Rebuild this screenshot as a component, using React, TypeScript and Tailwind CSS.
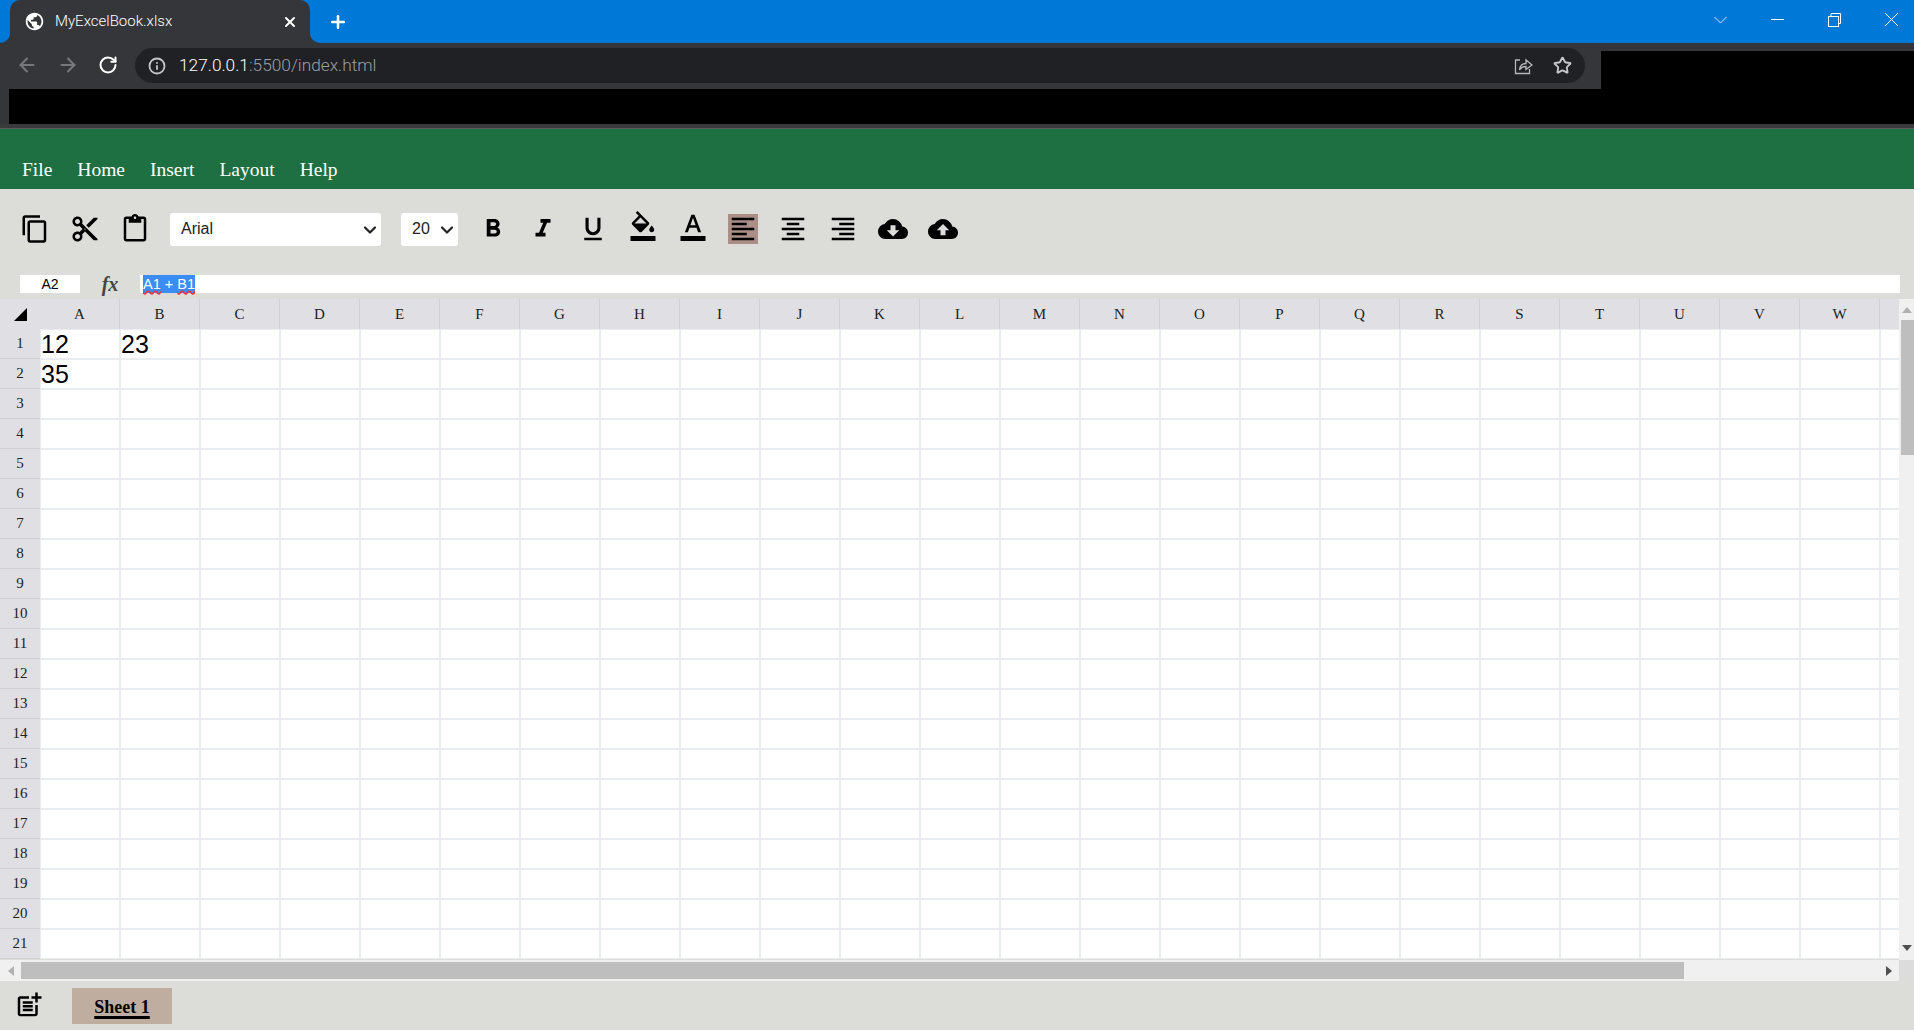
import { ArrowLeft, ArrowRight, ChevronDown, Info, Plus, RotateCw, Star, X } from 'lucide-react'
import {
  MdCloudDownload,
  MdCloudUpload,
  MdContentCopy,
  MdContentCut,
  MdContentPaste,
  MdFormatAlignCenter,
  MdFormatAlignLeft,
  MdFormatAlignRight,
  MdFormatBold,
  MdFormatColorFill,
  MdFormatColorText,
  MdFormatItalic,
  MdFormatUnderlined,
  MdPostAdd,
  MdPublic,
} from 'react-icons/md'

// last entry is the column that is cut off by the scrollbar, so it has no label
const columns = [...'ABCDEFGHIJKLMNOPQRSTUVW'.split(''), '']
const rows = Array.from({ length: 21 }, (_, i) => i + 1)
const menu = ['File', 'Home', 'Insert', 'Layout', 'Help']
const cells: Record<string, string> = { A1: '12', B1: '23', A2: '35' }

function BrowserChrome() {
  return (
    <div className="font-['Roboto',sans-serif]">
      {/* tab strip */}
      <div className="flex h-[43px] items-end bg-[#0078d7] pl-[10px]">
        <div className="relative flex h-[43px] w-[300px] items-center rounded-t-[10px] bg-[#35363a] pl-[14px] pr-[12px] text-white">
          <div className="absolute bottom-0 -left-[10px] h-[10px] w-[10px] bg-[#35363a]">
            <div className="h-full w-full rounded-br-[10px] bg-[#0078d7]" />
          </div>
          <div className="absolute -right-[10px] bottom-0 h-[10px] w-[10px] bg-[#35363a]">
            <div className="h-full w-full rounded-bl-[10px] bg-[#0078d7]" />
          </div>
          <MdPublic size={21} />
          <span className="ml-[10px] flex-1 text-[15px] font-light leading-none">MyExcelBook.xlsx</span>
          <X size={16} strokeWidth={3} />
        </div>
        <Plus size={20} strokeWidth={3} className="mb-[11px] ml-[18px] text-white" />
        <div className="mb-[12px] ml-auto flex h-[20px] items-center gap-[44px] pr-[16px] text-white">
          <svg width="13" height="20" viewBox="0 0 13 20" fill="none" stroke="#cfe4f7" strokeWidth="1">
            <path d="M0.5 6 L6.5 12 L12.5 6" />
          </svg>
          <svg width="13" height="20" viewBox="0 0 13 20" fill="none" stroke="white" strokeWidth="1">
            <path d="M0 8.5 H13" />
          </svg>
          <svg width="13" height="20" viewBox="0 0 13 20" fill="none" stroke="white" strokeWidth="1">
            <rect x="0.5" y="5.5" width="10" height="10" />
            <path d="M3 5 V2.5 H12.5 V12.5 H11" />
          </svg>
          <svg width="13" height="20" viewBox="0 0 13 20" fill="none" stroke="white" strokeWidth="1">
            <path d="M0 2 L13 15 M13 2 L0 15" />
          </svg>
        </div>
      </div>

      {/* toolbar + captured black area */}
      <div className="flex h-[46px] bg-[#35363a]">
        <div className="flex h-[46px] w-[1601px] items-start pl-[16px] pt-[5px]">
          <ArrowLeft size={22} strokeWidth={2.3} className="mt-[6px] text-[#76787c]" />
          <ArrowRight size={22} strokeWidth={2.3} className="ml-[19px] mt-[6px] text-[#76787c]" />
          <RotateCw size={20} strokeWidth={2.4} className="ml-[19px] mt-[7px] text-white" />
          <div className="ml-[17px] flex h-[35px] w-[1450px] items-center rounded-full bg-[#202124] pl-[13px] pr-[13px] text-[17.3px] font-light">
            <Info size={18} strokeWidth={2.4} className="text-[#c4c6c9]" />
            <span className="ml-[13px] text-white">127.0.0.1</span>
            <span className="text-[#9aa0a6]">:5500/index.html</span>
            <svg width="20" height="20" viewBox="0 0 20 20" fill="none" stroke="#b5b7ba" strokeWidth="1.3" className="ml-auto">
              <path d="M7 4 H2.5 V17.5 H16.5 V13" />
              <path d="M6.5 14 C7 9.5 10 7.5 13 7.5 V4 L19 9 L13 13.5 V10.5 C10.5 10.5 8 11.5 6.5 14 Z" />
            </svg>
            <Star size={19} strokeWidth={2.4} className="ml-[20px] text-[#c4c6c9]" />
          </div>
        </div>
        <div className="mt-[8px] flex-1 bg-black" />
      </div>
      <div className="flex h-[35px] bg-[#35363a] pl-[9px]">
        <div className="flex-1 bg-black" />
      </div>
      <div className="h-[5px] border-b border-[#5a5b5e] bg-[#3a3a3d]" />
    </div>
  )
}

function ToolIcon({ children, active, raised }: { children: React.ReactNode; active?: boolean; raised?: boolean }) {
  return (
    <div className={`${active ? 'bg-[#ab8f87]' : ''} ${raised ? '-mt-[6px]' : ''} text-black`}>
      {children}
    </div>
  )
}

function ToolSelect({ value, width }: { value: string; width: string }) {
  return (
    <div className={`relative h-[33px] ${width}`}>
      <select
        defaultValue={value}
        className="h-full w-full appearance-none rounded-[3px] bg-white pl-[11px] font-['Liberation_Sans',sans-serif] text-[16px] text-[#222] outline-none"
      >
        <option>{value}</option>
      </select>
      <ChevronDown size={20} strokeWidth={2.6} className="pointer-events-none absolute right-px top-[7px] text-[#222]" />
    </div>
  )
}

function Toolbar() {
  return (
    <div className="flex h-[86px] items-center gap-[20px] bg-[#dcddd8] pb-[6px] pl-[20px]">
      <ToolIcon><MdContentCopy size={30} /></ToolIcon>
      <ToolIcon><MdContentCut size={30} /></ToolIcon>
      <ToolIcon><MdContentPaste size={30} /></ToolIcon>
      <ToolSelect value="Arial" width="w-[211px]" />
      <ToolSelect value="20" width="w-[57px]" />
      <ToolIcon><MdFormatBold size={30} /></ToolIcon>
      <ToolIcon><MdFormatItalic size={30} /></ToolIcon>
      <ToolIcon><MdFormatUnderlined size={30} /></ToolIcon>
      <ToolIcon raised><MdFormatColorFill size={30} /></ToolIcon>
      <ToolIcon raised><MdFormatColorText size={30} /></ToolIcon>
      <ToolIcon active><MdFormatAlignLeft size={30} /></ToolIcon>
      <ToolIcon><MdFormatAlignCenter size={30} /></ToolIcon>
      <ToolIcon><MdFormatAlignRight size={30} /></ToolIcon>
      <ToolIcon><MdCloudDownload size={30} /></ToolIcon>
      <ToolIcon><MdCloudUpload size={30} /></ToolIcon>
    </div>
  )
}

function FormulaBar() {
  return (
    <div className="flex h-[24px] items-start bg-[#dcddd8] pl-[20px] pr-[14px] font-['Liberation_Sans',sans-serif]">
      <div className="flex h-[18px] w-[60px] items-center justify-center bg-white text-[14px] text-black">A2</div>
      <div className="flex h-[18px] w-[60px] items-center justify-center font-['Liberation_Serif',serif] text-[20px] font-bold italic text-[#444]">
        fx
      </div>
      <div className="flex h-[18px] flex-1 items-center bg-white pl-[3px] text-[14.5px] leading-[18px] text-white">
        <span className="whitespace-pre bg-[#3b8cf5]">
          <span className="underline decoration-red-500 decoration-wavy">A1</span> + <span className="underline decoration-red-500 decoration-wavy">B1</span>
        </span>
      </div>
    </div>
  )
}

function Grid() {
  return (
    <div className="min-w-0 flex-1 overflow-hidden font-['Liberation_Serif',serif]">
      <div className="flex h-[30px] w-max bg-[#dfdfe4]">
        <div className="flex h-[30px] w-[40px] items-center justify-center">
          <div className="h-0 w-0 border-b-[13px] border-l-[13px] border-b-black border-l-transparent" />
        </div>
        {columns.map((c, i) => (
          <div
            key={i}
            className="flex h-[30px] w-[80px] items-center justify-center border-r border-[#cfcfd4] text-[15px] text-[#222]"
          >
            {c}
          </div>
        ))}
      </div>
      {rows.map((r) => (
        <div key={r} className="flex h-[30px] w-max">
          <div className="flex h-[30px] w-[40px] items-center justify-center border-b border-[#cfcfd4] bg-[#dfdfe4] text-[15px] text-[#222]">
            {r}
          </div>
          {columns.map((c, i) => (
            <div
              key={i}
              className="flex h-[30px] w-[80px] items-center overflow-hidden border border-[#e9edf2] bg-white font-['Liberation_Sans',sans-serif] text-[25px] leading-none text-black"
            >
              {cells[c + r]}
            </div>
          ))}
        </div>
      ))}
    </div>
  )
}

function VerticalScrollbar() {
  return (
    <div className="flex w-[15px] shrink-0 flex-col bg-[#f1f0f1]">
      <div className="flex h-[21px] items-center justify-center">
        <div className="h-0 w-0 border-x-[5px] border-b-[6px] border-x-transparent border-b-[#b0b0b0]" />
      </div>
      <div className="ml-[2px] h-[135px] bg-[#bebebe]" />
      <div className="mt-auto flex h-[21px] items-center justify-center pb-[4px]">
        <div className="h-0 w-0 border-x-[5px] border-t-[6px] border-x-transparent border-t-[#505050]" />
      </div>
    </div>
  )
}

function HorizontalScrollbar() {
  return (
    <div className="flex h-[21px] bg-[#f1f0f1] pt-[2px]">
      <div className="flex h-[17px] w-[21px] items-center justify-center">
        <div className="h-0 w-0 border-y-[5px] border-r-[6px] border-y-transparent border-r-[#b0b0b0]" />
      </div>
      <div className="h-[17px] w-[1663px] bg-[#bebebe]" />
      <div className="flex h-[17px] flex-1 items-center justify-end pr-[7px]">
        <div className="h-0 w-0 border-y-[5px] border-l-[6px] border-y-transparent border-l-[#505050]" />
      </div>
      <div className="-mt-[2px] h-[21px] w-[15px] bg-[#dcdcdc]" />
    </div>
  )
}

export default function App() {
  return (
    <div className="flex h-[1030px] w-[1914px] flex-col overflow-hidden bg-[#dcddd8]">
      <BrowserChrome />

      <div className="flex h-[60px] items-end gap-[25px] bg-[#1e6f42] pb-[7px] pl-[22px] font-['Liberation_Serif',serif] text-[19.5px] leading-[24px] text-white">
        {menu.map((item) => (
          <span key={item}>{item}</span>
        ))}
      </div>

      <Toolbar />
      <FormulaBar />

      <div className="flex h-[661px]">
        <Grid />
        <VerticalScrollbar />
      </div>
      <HorizontalScrollbar />

      {/* sheet tabs */}
      <div className="flex flex-1 items-start pl-[14px] pt-[7px]">
        <MdPostAdd size={30} className="mt-[2px] text-black" />
        <div className="ml-[28px] flex h-[36px] w-[100px] items-center justify-center bg-[#bfaea0] pt-[2px] font-['Liberation_Serif',serif] text-[18px] font-bold text-black underline decoration-[3px] underline-offset-[3px]">
          Sheet 1
        </div>
      </div>
    </div>
  )
}
